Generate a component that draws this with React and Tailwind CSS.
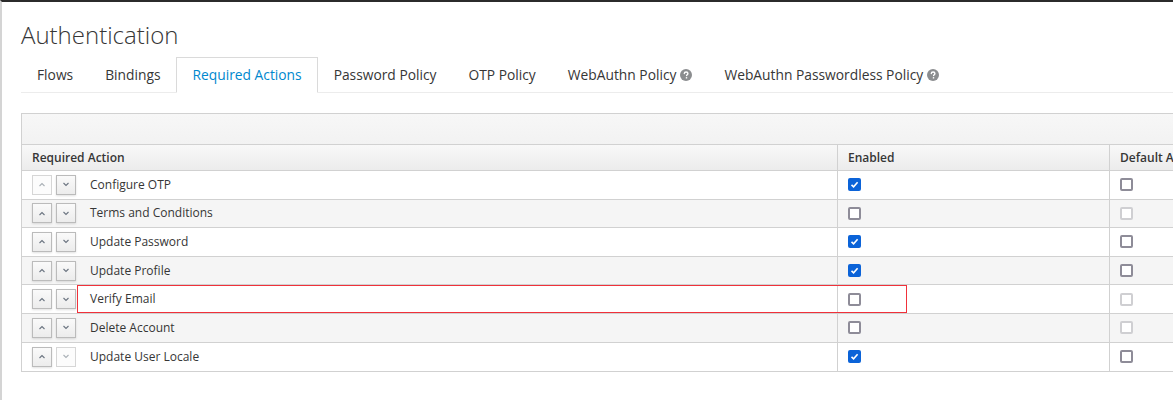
import React from 'react';

const tabs = [
  { label: 'Flows' },
  { label: 'Bindings' },
  { label: 'Required Actions', active: true },
  { label: 'Password Policy' },
  { label: 'OTP Policy' },
  { label: 'WebAuthn Policy', help: true },
  { label: 'WebAuthn Passwordless Policy', help: true },
];

const rows = [
  { name: 'Configure OTP', enabled: true, def: 'off', upOff: true },
  { name: 'Terms and Conditions', enabled: false, def: 'disabled' },
  { name: 'Update Password', enabled: true, def: 'off' },
  { name: 'Update Profile', enabled: true, def: 'off' },
  { name: 'Verify Email', enabled: false, def: 'disabled', marked: true },
  { name: 'Delete Account', enabled: false, def: 'disabled' },
  { name: 'Update User Locale', enabled: true, def: 'off', downOff: true },
];

function HelpIcon() {
  return (
    <svg width="12" height="12" viewBox="0 0 12 12" className="ml-[4px] inline-block">
      <circle cx="6" cy="6" r="6" fill="#8b8d8f" />
      <path d="M4.3 4.6c0-1 .8-1.6 1.8-1.6s1.8.6 1.8 1.5c0 1.1-1.3 1.2-1.3 2.1" stroke="#fff" strokeWidth="1.4" fill="none" strokeLinecap="round" />
      <rect x="5.8" y="8.1" width="1.4" height="1.4" fill="#fff" />
    </svg>
  );
}

function Checkbox({ checked, disabled }) {
  if (checked) {
    return (
      <span className="flex h-[13px] w-[13px] items-center justify-center rounded-[2px] bg-[#0b63d8]">
        <svg width="9" height="9" viewBox="0 0 9 9">
          <path d="M1.5 4.8 3.6 6.8 7.6 2.3" stroke="#fff" strokeWidth="1.6" fill="none" />
        </svg>
      </span>
    );
  }
  return (
    <span
      className={`block h-[13px] w-[13px] rounded-[2px] border-2 bg-white ${
        disabled ? 'border-[#cfcfd2]' : 'border-[#8e8c98]'
      }`}
    />
  );
}

function MoveButton({ dir, off }) {
  return (
    <span
      className={`flex h-[20px] w-[20px] items-center justify-center border ${
        off
          ? 'border-[#d6d6d6] bg-[#fcfcfc]'
          : 'border-[#bbbbbb] bg-gradient-to-b from-[#fafafa] to-[#ececec] shadow-[0_1px_2px_rgba(0,0,0,0.12)]'
      }`}
    >
      <svg width="8" height="5" viewBox="0 0 8 5">
        <path
          d={dir === 'up' ? 'M1.5 4 4 1.5 6.5 4' : 'M1.5 1 4 3.5 6.5 1'}
          stroke={off ? '#aab0b6' : '#6b7480'}
          strokeWidth="1.1"
          fill="none"
        />
      </svg>
    </span>
  );
}

export default function App() {
  return (
    <div
      className="relative h-[400px] w-[1173px] overflow-hidden border-l-2 border-t-2 border-l-[#d4d4d4] border-t-[#2b2b2b] bg-white text-[#363636]"
      style={{ fontFamily: '"Open Sans", "Liberation Sans", sans-serif' }}
    >
      <div className="pl-[19px]">
        <h1 className="pt-[17px] text-[24px] font-light leading-[32px] text-[#363636]">Authentication</h1>

        <div className="mt-[6px] flex h-[36px] border-b border-[#ececec]">
          {tabs.map((t) => (
            <div
              key={t.label}
              className={`-mb-px flex items-center border px-[15px] text-[13.8px] ${
                t.active
                  ? 'border-[#dadada] border-b-white bg-white text-[#0088ce]'
                  : 'border-transparent text-[#363636]'
              }`}
            >
              {t.label}
              {t.help && <HelpIcon />}
            </div>
          ))}
        </div>

        <div className="relative mt-[20px] border border-r-0 border-[#d1d1d1] text-[12px]">
          <div className="h-[31px] border-b border-[#d1d1d1] bg-gradient-to-b from-[#f7f7f7] to-[#f2f2f2]" />
          <div className="grid h-[26px] grid-cols-[815px_272px_1fr] border-b border-[#d1d1d1] bg-gradient-to-b from-[#f8f8f8] to-[#ececec] font-semibold">
            <div className="flex items-center pl-[10px]">Required Action</div>
            <div className="flex items-center border-l border-[#d1d1d1] pl-[10px]">Enabled</div>
            <div className="flex items-center whitespace-nowrap border-l border-[#d1d1d1] pl-[10px]">Default Action</div>
          </div>
          {rows.map((r, i) => (
            <div
              key={r.name}
              className={`grid h-[28.6px] grid-cols-[815px_272px_1fr] ${
                i < rows.length - 1 ? 'border-b border-[#d1d1d1]' : ''
              } ${i % 2 === 1 ? 'bg-[#f5f5f5]' : 'bg-white'}`}
            >
              <div className="flex items-center pl-[10px]">
                <div className="flex gap-[4px]">
                  <MoveButton dir="up" off={r.upOff} />
                  <MoveButton dir="down" off={r.downOff} />
                </div>
                <span className="ml-[14px]">{r.name}</span>
              </div>
              <div className="flex items-center border-l border-[#d1d1d1] pl-[10px]">
                <Checkbox checked={r.enabled} />
              </div>
              <div className="flex items-center border-l border-[#d1d1d1] pl-[10px]">
                <Checkbox disabled={r.def === 'disabled'} />
              </div>
            </div>
          ))}
          {/* highlight box over the Verify Email row */}
          <div className="pointer-events-none absolute left-[55px] top-[171px] h-[28px] w-[830px] border border-[#f0313a]" />
        </div>
      </div>
    </div>
  );
}
